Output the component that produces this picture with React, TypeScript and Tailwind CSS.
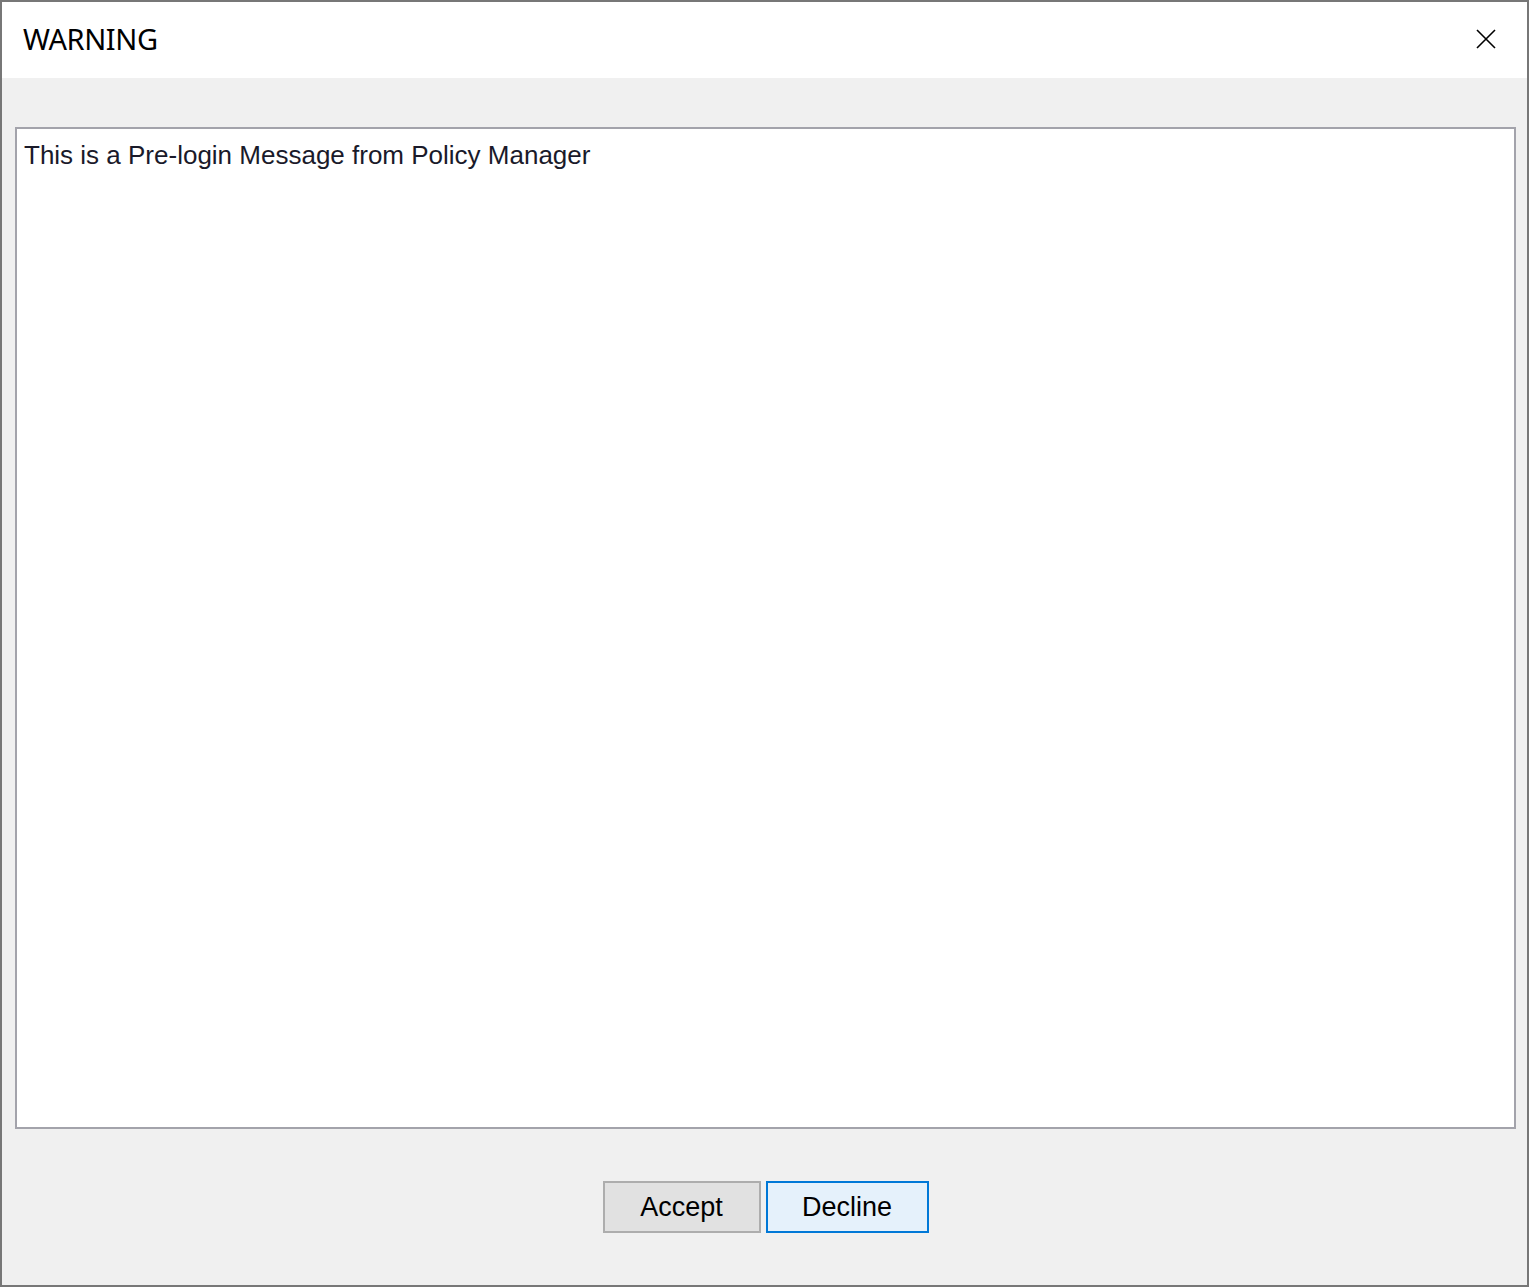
export default function App() {
  return (
    <div className="flex h-[1287px] w-[1529px] flex-col border-2 border-[#777777] bg-[#f0f0f0] font-['Noto_Sans',sans-serif] text-black">
      {/* Title bar */}
      <div className="flex h-[76px] shrink-0 items-center justify-between bg-white pb-[3px] pl-[21px] pr-[31px]">
        <span className="text-[29px] tracking-[-0.4px] leading-none">WARNING</span>
        <svg width="20" height="20" viewBox="0 0 20 20" className="text-black">
          <path d="M1 1 L19 19 M19 1 L1 19" stroke="currentColor" strokeWidth="1.6" />
        </svg>
      </div>

      {/* Message box */}
      <div className="ml-[13px] mr-[11px] mt-[49px] h-[1002px] shrink-0 border-2 border-[#a3a3ab] bg-white px-[7px] pt-[9px]">
        <p className="font-['Liberation_Sans',sans-serif] text-[26px] leading-[34px] text-[#1a1a2a]">
          This is a Pre-login Message from Policy Manager
        </p>
      </div>

      {/* Buttons */}
      <div className="mt-[52px] flex justify-center gap-[5px] pl-[2px]">
        <button className="h-[52px] w-[158px] border-2 border-[#adadad] bg-[#e1e1e1] font-['Liberation_Sans',sans-serif] text-[27px] text-black">
          Accept
        </button>
        <button className="h-[52px] w-[163px] border-2 border-[#0078d7] bg-[#e5f1fb] font-['Liberation_Sans',sans-serif] text-[27px] text-black">
          Decline
        </button>
      </div>
    </div>
  );
}
